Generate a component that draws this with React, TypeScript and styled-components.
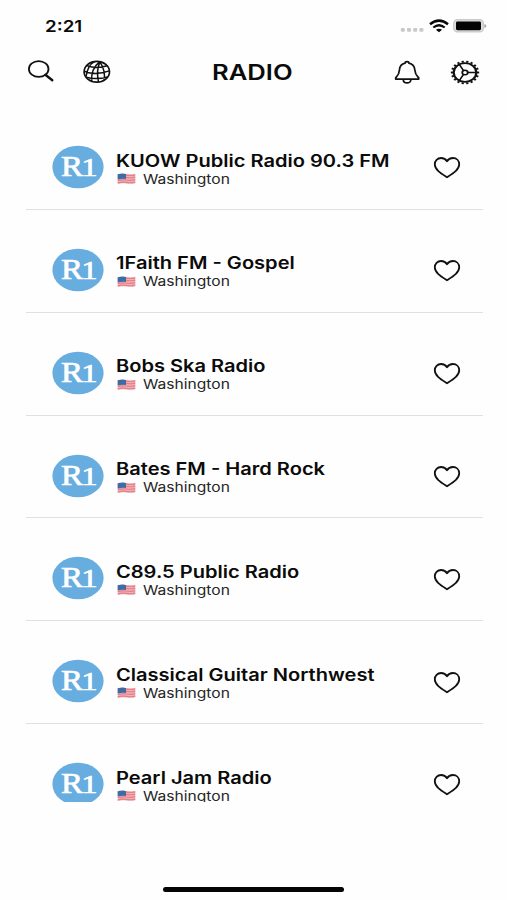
import React from 'react';
import styled, { createGlobalStyle } from 'styled-components';

const GlobalStyle = createGlobalStyle`
  * { box-sizing: border-box; }
  body { margin: 0; background: #fefefe; color: #0b0b0b; font-family: Inter, "Liberation Sans", sans-serif; }
  svg { display: block; flex: none; }
`;

const Screen = styled.main`
  width: 507px;
  height: 900px;
  display: flex;
  flex-direction: column;
  overflow: hidden;
  background: #fefefe;
`;

const StatusBar = styled.div`
  height: 46px;
  padding: 6px 20px 0 45px;
  display: flex;
  align-items: center;
  justify-content: space-between;
`;

const Wide = styled.span<{ $scale: number }>`
  display: block;
  white-space: nowrap;
  transform: scaleX(${(p) => p.$scale});
  transform-origin: left center;
`;

const Clock = styled(Wide)`
  font-size: 16px;
  line-height: 20px;
  font-weight: 600;
`;

const StatusIcons = styled.div`
  display: flex;
  align-items: center;
  gap: 4.5px;
`;

const Header = styled.header`
  height: 61px;
  padding: 0 26px 9px 26px;
  display: grid;
  grid-template-columns: 30px 26px 30px 1fr 30px 27px 32px;
  align-items: center;
`;

const Heading = styled.h1`
  margin: 0;
  font-size: 21px;
  line-height: 26px;
  font-weight: 600;
  padding: 2px 0 0 100px;
`;

const IconButton = styled.button`
  padding: 0;
  border: 0;
  background: none;
  display: flex;
  justify-content: center;
  color: #111;
`;

const List = styled.ul`
  height: 695px;
  margin: 0 24px 0 26px;
  padding: 0;
  overflow: hidden;
  list-style: none;
`;

const Row = styled.li`
  height: 102.86px;
  padding: 38px 22px 0 26px;
  display: flex;
  align-items: flex-start;
  border-bottom: 1px solid #e1e1e1;
`;

const Details = styled.div`
  flex: 1;
  padding: 5.5px 0 0 12px;
`;

const Name = styled(Wide)`
  font-size: 17px;
  line-height: 20px;
  font-weight: 600;
`;

const Place = styled.div`
  display: flex;
  align-items: center;
  gap: 7px;
  padding-left: 1px;
  height: 17px;
`;

const PlaceName = styled(Wide)`
  font-size: 13px;
  line-height: 17px;
  color: #252525;
`;

const Favorite = styled(IconButton)`
  padding-top: 11.3px;
`;

const HomeArea = styled.footer`
  flex: 1;
  display: flex;
  justify-content: center;
  align-items: flex-end;
  padding-bottom: 8px;
`;

const HomeIndicator = styled.div`
  width: 181px;
  height: 5px;
  border-radius: 3px;
  background: #050505;
`;

const stations = [
  'KUOW Public Radio 90.3 FM',
  '1Faith FM - Gospel',
  'Bobs Ska Radio',
  'Bates FM - Hard Rock',
  'C89.5 Public Radio',
  'Classical Guitar Northwest',
  'Pearl Jam Radio',
];

const SearchIcon = () => (
  <svg width="30" height="26" viewBox="0 0 30 26" fill="none" stroke="currentColor">
    <ellipse cx="12.7" cy="10" rx="9.8" ry="7.9" strokeWidth="1.8" />
    <path d="M19.4 15.7L26.3 21.3" strokeWidth="2.4" strokeLinecap="round" />
  </svg>
);

const GlobeIcon = () => (
  <svg width="30" height="26" viewBox="0 0 30 26" fill="none" stroke="currentColor" strokeWidth="1.5">
    <ellipse cx="14.8" cy="12.8" rx="12.7" ry="10.4" strokeWidth="1.7" />
    <path d="M4.6 6.5Q14.5 10.5 25 6.8M2.3 12.2Q13.5 16.8 27.3 11.9M4.2 18.3Q14.5 21 25.6 18M17.5 2.8Q8.6 10 9.8 22M18 2.8Q14 11 16.5 23M18 2.8Q23.5 11.6 22.3 20.8M12 2.8Q6 6 4 17.5" />
  </svg>
);

const BellIcon = () => (
  <svg width="30" height="26" viewBox="0 0 30 26" fill="none" stroke="currentColor" strokeWidth="1.75" strokeLinejoin="round">
    <path d="M15 2.6C13.5 2.6 13.1 3.3 13.1 4.2C8.7 5.1 7.6 8.2 7.4 11.2C7 16.1 5.2 17.2 3.7 18.8V20H26.7V18.8C25.1 17.2 23.3 16.1 22.9 11.2C22.6 8.2 21.3 5.1 16.9 4.2C16.9 3.3 16.5 2.6 15 2.6Z" />
    <path d="M11.3 20.4C11.3 25.1 18.9 25.1 18.9 20.4" />
  </svg>
);

const GearIcon = () => (
  <svg width="32" height="28" viewBox="0 0 32 28" fill="none" stroke="currentColor">
    <g transform="translate(16 14.5) scale(1.2 1)">
      <circle r="9.4" strokeWidth="1.8" />
      {Array.from({ length: 18 }, (_, i) => (
        <path key={i} d="M10 0H11.8" strokeWidth="1.9" transform={`rotate(${i * 20})`} />
      ))}
      <circle r="2.3" strokeWidth="1.5" />
      <path d="M2.3 0H9.3M-1.3 -2L-4.7 -8M-1.3 2L-4.7 8" strokeWidth="1.5" />
    </g>
  </svg>
);

const SignalIcon = () => (
  <svg width="24" height="16" viewBox="0 0 24 16" fill="#c9c9c9">
    {[0, 6.2, 12.4, 18.6].map((x) => <rect key={x} x={x + 0.8} y="10" width="4" height="3.8" rx="1" />)}
  </svg>
);

const WifiIcon = () => (
  <svg width="20" height="16" viewBox="0 0 20 16" fill="none" stroke="#080808">
    <path d="M1 6.2Q10 -1 19 6.2" strokeWidth="2.5" />
    <path d="M4.3 9.5Q10 5 15.7 9.5" strokeWidth="2.2" />
    <path d="M10 14.3L6.9 11.7Q10 9.7 13.1 11.7Z" fill="#080808" stroke="none" />
  </svg>
);

const BatteryIcon = () => (
  <svg width="34" height="16" viewBox="0 0 34 16">
    <rect x=".8" y="1.7" width="29.6" height="12.2" rx="3.7" fill="#dedede" stroke="#c9c9c9" strokeWidth="1.3" />
    <rect x="3" y="3.6" width="25" height="8.6" rx="1.4" fill="#050505" />
    <path d="M31.4 6V10Q33.4 9.5 33.4 8Q33.4 6.5 31.4 6Z" fill="#aaa" />
  </svg>
);

const StationLogo = () => (
  <svg width="52" height="44" viewBox="0 0 52 44">
    <ellipse cx="26" cy="22" rx="25.6" ry="21.3" fill="#68addf" />
    <g fill="#fff" stroke="#fff" strokeWidth=".7" fontFamily="Liberation Serif, serif">
      <text x="9" y="31.2" fontSize="29" textLength="22" lengthAdjust="spacingAndGlyphs">R</text>
      <text x="29.5" y="31.2" fontSize="25.5" textLength="16" lengthAdjust="spacingAndGlyphs">1</text>
    </g>
  </svg>
);

const FlagIcon = () => (
  <svg width="19" height="12" viewBox="0 0 19 12">
    <path d="M.7 1.2Q5 .2 9.3 1Q14 1.9 18.3.8V10.2Q14 11.2 9.3 10.5Q5 9.8.7 10.9Z" fill="#f0b0b5" />
    <path d="M9 2.1Q14 2.9 18.2 1.9M9 4.4Q14 5.2 18.2 4.2M.8 7.5Q5 6.4 9.3 7Q14 7.8 18.2 6.7M.8 9.8Q5 8.8 9.3 9.4Q14 10.2 18.2 9.2" stroke="#e37f89" strokeWidth="1.2" fill="none" />
    <path d="M.7 1.2Q5 .2 9 .9V6Q5 5.5.7 6.5Z" fill="#3f6ba4" />
  </svg>
);

const HeartIcon = () => (
  <svg width="28" height="24" viewBox="0 0 28 24" fill="none" stroke="#111" strokeWidth="1.8" strokeLinejoin="round">
    <path d="M14 5.2C12.7 3.1 10.7 2 8.1 2C4.4 2 1.8 4.7 1.8 8.3C1.8 14 8.5 17.8 14 21.3C19.5 17.8 26.2 14 26.2 8.3C26.2 4.7 23.6 2 19.9 2C17.3 2 15.3 3.1 14 5.2Z" />
  </svg>
);

export default function App() {
  return (
    <Screen>
      <GlobalStyle />
      <StatusBar>
        <Clock $scale={1.17}>2:21</Clock>
        <StatusIcons>
          <SignalIcon />
          <WifiIcon />
          <BatteryIcon />
        </StatusIcons>
      </StatusBar>
      <Header>
        <IconButton aria-label="Search"><SearchIcon /></IconButton>
        <span />
        <IconButton aria-label="Countries"><GlobeIcon /></IconButton>
        <Heading><Wide $scale={1.22}>RADIO</Wide></Heading>
        <IconButton aria-label="Notifications"><BellIcon /></IconButton>
        <span />
        <IconButton aria-label="Settings"><GearIcon /></IconButton>
      </Header>
      <List>
        {stations.map((name) => (
          <Row key={name}>
            <StationLogo />
            <Details>
              <Name $scale={1.18}>{name}</Name>
              <Place><FlagIcon /><PlaceName $scale={1.2}>Washington</PlaceName></Place>
            </Details>
            <Favorite aria-label={`Favorite ${name}`}><HeartIcon /></Favorite>
          </Row>
        ))}
      </List>
      <HomeArea><HomeIndicator /></HomeArea>
    </Screen>
  );
}
